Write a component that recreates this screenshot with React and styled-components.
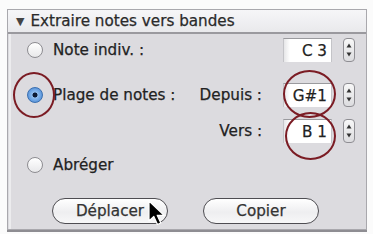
import styled, { createGlobalStyle } from "styled-components";

const GlobalStyle = createGlobalStyle`
  html, body {
    margin: 0;
    padding: 0;
    background: #fbfbfb;
  }
  body {
    font-family: "DejaVu Sans", "Liberation Sans", sans-serif;
  }
`;

export default function App() {
  return (
    <>
      <GlobalStyle />
      <Page>
        <Panel>
          <Header>
            <Triangle>▼</Triangle>
            Extraire notes vers bandes
          </Header>
          <Body>
            <Row $top={4}>
              <Choice>
                <Radio />
                <Label>Note indiv. :</Label>
              </Choice>
              <Field>C 3</Field>
              <Stepper />
            </Row>
            <Row $top={21}>
              <Choice>
                <Radio $checked />
                <Label>Plage de notes :</Label>
              </Choice>
              <SubLabel>Depuis :</SubLabel>
              <Field>G#1</Field>
              <Stepper />
            </Row>
            <Row $top={12}>
              <Choice />
              <SubLabel>Vers :</SubLabel>
              <Field>B 1</Field>
              <Stepper />
            </Row>
            <Row $top={10}>
              <Choice>
                <Radio />
                <Label>Abréger</Label>
              </Choice>
            </Row>
            <Buttons>
              <Button>Déplacer</Button>
              <Button>Copier</Button>
            </Buttons>
          </Body>
          <Mark $x={13} $y={72} $w={42} $h={46} />
          <Mark $x={283} $y={70} $w={53} $h={48} />
          <Mark $x={285} $y={112} $w={51} $h={48} />
          <Cursor width="20" height="27" viewBox="0 0 20 27">
            <path
              d="M2 1 L2 21 L6.8 16.5 L10.5 24.5 L13.8 23 L10.2 15.3 L17 15.3 Z"
              fill="#000"
              stroke="#fff"
              strokeWidth="1.2"
              strokeLinejoin="round"
            />
          </Cursor>
        </Panel>
      </Page>
    </>
  );
}

function Stepper() {
  return (
    <StepperBox>
      <svg width="6" height="18" viewBox="0 0 6 18">
        <path d="M3 2.5 L5.5 6.5 L0.5 6.5 Z" fill="#333" />
        <path d="M3 15.5 L5.5 11.5 L0.5 11.5 Z" fill="#333" />
      </svg>
    </StepperBox>
  );
}

const Page = styled.div`
  width: 373px;
  height: 234px;
  padding: 9px 0 0 7px;
  box-sizing: border-box;
`;

const Panel = styled.div`
  position: relative;
  width: 360px;
  height: 221px;
  border: 1px solid #a9a8ad;
  box-sizing: border-box;
  display: flex;
  flex-direction: column;
  background: #dcdbdf;
  box-shadow: 0 2px 0 #8e8d92;
`;

const Header = styled.div`
  height: 22px;
  flex: none;
  display: flex;
  align-items: center;
  padding-left: 8px;
  font-size: 15.2px;
  color: #2a2a2a;
  background: linear-gradient(#f6f6f8, #e9e9ec);
  border-bottom: 2px solid #9a999e;
  -webkit-text-stroke: 0.25px #2a2a2a;
`;

const Triangle = styled.span`
  font-size: 11px;
  color: #444;
  margin-right: 6px;
  -webkit-text-stroke: 0;
`;

const Body = styled.div`
  flex: 1;
  display: flex;
  flex-direction: column;
  padding: 0 0 0 16px;
  border-left: 2px solid #ececee;
  margin-left: 1px;
`;

const Row = styled.div`
  display: grid;
  grid-template-columns: 145px 111px 49px 23px;
  align-items: center;
  height: 24px;
  margin-top: ${(p) => p.$top}px;
`;

const Choice = styled.div`
  display: flex;
  align-items: center;
  gap: 10px;
  white-space: nowrap;
`;

const Radio = styled.span`
  width: 16px;
  height: 16px;
  border-radius: 50%;
  box-sizing: border-box;
  flex: none;
  border: 1.5px solid ${(p) => (p.$checked ? "#3a6fb0" : "#8d8c91")};
  background: ${(p) =>
    p.$checked
      ? "radial-gradient(circle, #0d1a33 0 2.2px, #8fbcee 2.8px, #3b7fd0 100%)"
      : "linear-gradient(#ffffff, #e8e8ea)"};
`;

const Label = styled.span`
  font-size: 15.2px;
  color: #222;
  -webkit-text-stroke: 0.25px #222;
`;

const SubLabel = styled.span`
  font-size: 15.2px;
  color: #222;
  text-align: right;
  padding-right: 21px;
  -webkit-text-stroke: 0.25px #222;
`;

const Field = styled.div`
  grid-column: 3;
  height: 24px;
  box-sizing: border-box;
  background: linear-gradient(90deg, #e6e6e8, #ffffff 6px);
  border-top: 1px solid #9a9a9e;
  border-left: 1px solid #c4c4c8;
  border-right: 1px solid #c4c4c8;
  display: flex;
  align-items: center;
  justify-content: flex-end;
  padding-right: 4px;
  font-size: 15.2px;
  color: #222;
  -webkit-text-stroke: 0.25px #222;
`;

const StepperBox = styled.div`
  grid-column: 4;
  justify-self: end;
  width: 12px;
  height: 24px;
  box-sizing: border-box;
  border: 1px solid #8f8e93;
  border-radius: 4px;
  background: linear-gradient(#f8f8f8, #dcdcdf);
  display: flex;
  align-items: center;
  justify-content: center;
`;

const Buttons = styled.div`
  display: flex;
  gap: 35px;
  margin-top: 21px;
  padding-left: 25px;
`;

const Button = styled.button`
  width: 116px;
  height: 26px;
  border-radius: 13px;
  border: 1.5px solid #4e4d52;
  background: linear-gradient(#ffffff, #eeeef0 55%, #f7f7f8);
  font-family: "DejaVu Sans", "Liberation Sans", sans-serif;
  font-size: 15.2px;
  color: #333;
  -webkit-text-stroke: 0.25px #333;
  padding: 0;
`;

const Mark = styled.div`
  position: absolute;
  left: ${(p) => p.$x - 8}px;
  top: ${(p) => p.$y - 10}px;
  width: ${(p) => p.$w}px;
  height: ${(p) => p.$h}px;
  border: 2px solid #7b1c24;
  border-radius: 50%;
  box-sizing: border-box;
`;

const Cursor = styled.svg`
  position: absolute;
  left: 139px;
  top: 190px;
`;
